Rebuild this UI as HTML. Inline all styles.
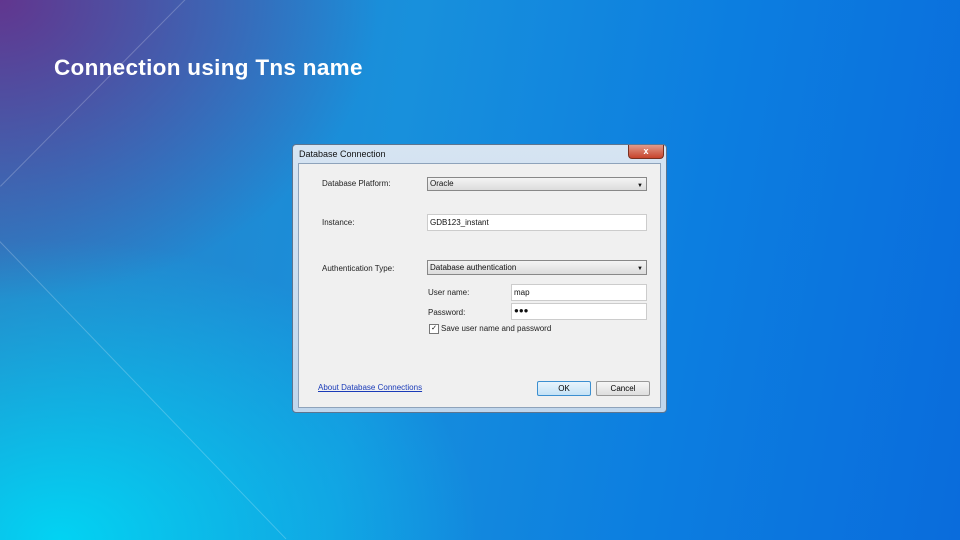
<!DOCTYPE html>
<html style="width:960px;height:540px;overflow:hidden"><head><style>
body{margin:0;width:960px;height:540px;overflow:hidden;position:relative;font-family:"Liberation Sans",sans-serif;
background:
radial-gradient(ellipse 380px 300px at 0px 0px, rgba(100,50,140,0.95), rgba(100,50,140,0) 100%),
radial-gradient(ellipse 420px 300px at 60px 540px, rgba(0,215,245,0.95), rgba(0,215,245,0) 100%),
linear-gradient(100deg,#2b80c4 0%,#1890dc 40%,#0c7ee0 70%,#0a6cdc 100%);background-size:960px 540px;background-repeat:no-repeat}
.t{position:absolute;left:54px;top:55px;color:#fff;font-size:22.5px;font-weight:bold;letter-spacing:0.3px}
.ln{position:absolute;background:rgba(255,255,255,0.22);height:1px;transform-origin:0 0}
.dlg{position:absolute;left:292px;top:144px;width:373px;height:267px;background:linear-gradient(#d6e4f2,#c0d6ec);border:1px solid #5d7590;border-radius:4px}
.in{position:absolute;left:5px;top:18px;width:361px;height:243px;background:#f0f0f0;border:1px solid #8ea3bb}
.x{position:absolute;left:335px;top:0;width:34px;height:13px;background:linear-gradient(#e09a8a,#c8442c);border:1px solid #7a3020;border-top:none;border-radius:0 0 4px 4px;color:#fff;font-size:9px;text-align:center;line-height:12px;font-weight:bold}
.tt{position:absolute;left:6px;top:4px;font-size:9px;color:#111}
.l{position:absolute;font-size:8px;color:#222}
.box{position:absolute;background:#fff;border:1px solid #ccc;font-size:8px;color:#111;padding-left:2px;box-sizing:border-box}
.dd{position:absolute;background:linear-gradient(#f4f4f4,#dcdcdc);border:1px solid #888;font-size:8px;color:#111;padding-left:2px;box-sizing:border-box}
.dd:after{content:"▼";position:absolute;right:3px;top:2px;font-size:6px}
.btn{position:absolute;font-size:8px;text-align:center;box-sizing:border-box;border-radius:2px}
</style></head><body>
<div class="ln" style="left:0;top:186px;width:263px;transform:rotate(-45.3deg)"></div>
<div class="ln" style="left:0;top:241px;width:413px;transform:rotate(46.1deg)"></div>
<div class="t">Connection using Tns name</div>
<div class="dlg">
<div class="tt">Database Connection</div>
<div class="x">x</div>
<div class="in">
<div class="l" style="left:23px;top:15px">Database Platform:</div>
<div class="dd" style="left:128px;top:13px;width:220px;height:14px;line-height:12px">Oracle</div>
<div class="l" style="left:23px;top:54px">Instance:</div>
<div class="box" style="left:128px;top:50px;width:220px;height:17px;line-height:15px">GDB123_instant</div>
<div class="l" style="left:23px;top:100px">Authentication Type:</div>
<div class="dd" style="left:128px;top:96px;width:220px;height:15px;line-height:13px">Database authentication</div>
<div class="l" style="left:129px;top:124px">User name:</div>
<div class="box" style="left:212px;top:120px;width:136px;height:17px;line-height:15px">map</div>
<div class="l" style="left:129px;top:144px">Password:</div>
<div class="box" style="left:212px;top:139px;width:136px;height:17px;line-height:13px">●●●</div>
<div style="position:absolute;left:130px;top:160px;width:8px;height:8px;border:1px solid #777;background:#fff;font-size:7px;line-height:8px;text-align:center">✓</div>
<div class="l" style="left:142px;top:160px">Save user name and password</div>
<div class="l" style="left:19px;top:219px;color:#1a3bb8;text-decoration:underline">About Database Connections</div>
<div class="btn" style="left:238px;top:217px;width:54px;height:15px;line-height:13px;border:1px solid #3c8fd0;background:linear-gradient(#e8f4fc,#c4e2f6)">OK</div>
<div class="btn" style="left:297px;top:217px;width:54px;height:15px;line-height:13px;border:1px solid #999;background:linear-gradient(#f6f6f6,#dedede)">Cancel</div>
</div>
</div>
</body></html>
